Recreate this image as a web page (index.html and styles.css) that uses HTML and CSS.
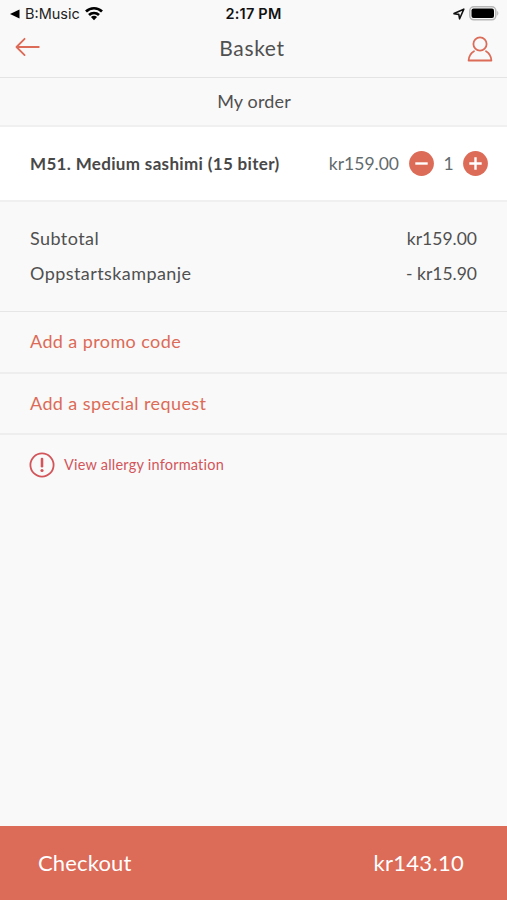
FILE: index.html
```html
<!DOCTYPE html>
<html lang="en">
<head>
<meta charset="utf-8">
<title>Basket</title>
<link rel="stylesheet" href="styles.css">
</head>
<body>
<div class="app">
  <div class="status">
    <div class="back-app">
      <svg width="10" height="10" viewBox="0 0 10 10"><path d="M0 5 9.5.6v8.8z"/></svg>
      <span>B:Music</span>
      <svg class="wifi" width="18" height="15" viewBox="0 0 18 15"><g fill="none" stroke="#000" stroke-width="2.7"><path d="M1 5.5a11.5 11.5 0 0 1 16 0"/><path d="M4 9a7.2 7.2 0 0 1 10 0"/></g><path d="M9 14.3 5.9 11.1a4.5 4.5 0 0 1 6.2 0z"/></svg>
    </div>
    <span class="clock">2:17 PM</span>
    <div class="power">
      <svg width="12" height="12" viewBox="0 0 12 12"><path d="M1 5.6 10.8 1.2 6.6 10.8 5.8 6.4z" fill="none" stroke="#111" stroke-width="1.6" stroke-linejoin="round"/></svg>
      <svg width="31" height="15" viewBox="0 0 31 15"><rect x=".8" y=".8" width="26" height="13" rx="4" fill="#f9f9f9" stroke="#b7b7b7" stroke-width="1.5"/><rect x="2.5" y="2.6" width="22.5" height="9.5" rx="2"/><path d="M28.2 4.8q2.4 2.5 0 5z" fill="#b7b7b7"/></svg>
    </div>
  </div>
  <header class="nav">
    <svg class="back" width="25" height="20" viewBox="0 0 25 20"><path d="M9.6 1.8 1.5 10l8.1 8.1M1.8 10h22" class="line"/></svg>
    <h1 class="title">Basket</h1>
    <svg width="26" height="26" viewBox="0 0 26 26"><circle cx="13" cy="8" r="6.6" class="line"/><path d="M7 15.2C3.7 17 1.9 20 1.6 24.5h22.8c-.3-4.500-2.100-7.500-5.400-9.300" class="line"/></svg>
  </header>
  <h2 class="section"><span class="my-order">My order</span></h2>
  <div class="item">
    <span class="name">M51. Medium sashimi (15 biter)</span>
    <span class="price">kr159.00</span>
    <svg width="25" height="25" viewBox="0 0 25 25"><circle cx="12.5" cy="12.5" r="12.4" class="disc"/><path d="M6.300 12.500h12.400" class="sign"/></svg>
    <span class="qty">1</span>
    <svg width="25" height="25" viewBox="0 0 25 25"><circle cx="12.5" cy="12.5" r="12.4" class="disc"/><path d="M6.300 12.500h12.400M12.500 6.300v12.400" class="sign"/></svg>
  </div>
  <div class="totals">
    <div class="row"><span class="label">Subtotal</span><span class="amount">kr159.00</span></div>
    <div class="row"><span class="label">Oppstartskampanje</span><span class="amount">- kr15.90</span></div>
  </div>
  <div class="link promo"><span>Add a promo code</span></div>
  <div class="link request"><span>Add a special request</span></div>
  <div class="allergy">
    <svg width="26" height="26" viewBox="0 0 26 26"><circle cx="13" cy="13" r="11.6" fill="none" stroke="#d2555a" stroke-width="1.8"/><path d="M13 7v7.2" stroke="#d2555a" stroke-width="2.6" stroke-linecap="round"/><circle cx="13" cy="18.5" r="1.6" fill="#d2555a"/></svg>
    <span class="allergy-text">View allergy information</span>
  </div>
  <footer class="checkout"><span class="pay">Checkout</span><span class="sum">kr143.10</span></footer>
</div>
</body>
</html>
```
FILE: styles.css
```css
* { box-sizing: border-box; }
body { margin: 0; }
.app {
  width: 507px; height: 900px;
  display: flex; flex-direction: column;
  background: #f9f9f9; color: #505050;
  font: 18px/24px Lato, "Noto Sans", sans-serif;
  font-variant-ligatures: none;
}
svg { display: block; flex: none; }
span { white-space: nowrap; }
.line { fill: none; stroke: #dc6b57; stroke-width: 1.8; stroke-linecap: round; stroke-linejoin: round; }
.disc { fill: #dc6b57; }
.sign { fill: none; stroke: #fff; stroke-width: 2.4; }
.status {
  display: grid; grid-template-columns: 1fr auto 1fr; align-items: center;
  height: 27px; padding: 0 7px 0 10px;
  font: 14.5px/20px Inter, sans-serif; color: #222;
}
.back-app { display: flex; align-items: center; gap: 5px; }
.clock { margin-right: 3px; font-weight: 600; color: #111; letter-spacing: .2px; }
.power { display: flex; align-items: center; justify-content: flex-end; gap: 4px; }
.nav {
  display: flex; justify-content: space-between; align-items: center;
  height: 51px; padding: 0 14px 6px 15px; border-bottom: 1px solid #e4e4e4;
}
.back { margin-bottom: 4px; }
.title { margin: 0 3px 2px 0; font-size: 21px; font-weight: 400; letter-spacing: .65px; }
.section {
  display: flex; align-items: center; justify-content: center;
  height: 49px; margin: 0; padding: 0 0 1px 1px; border-bottom: 2px solid #f0f0f0;
  font-size: 18px; font-weight: 400; letter-spacing: .15px;
}
.item {
  display: flex; align-items: center;
  height: 75px; padding: 0 19px 0 30px;
  background: #fff; border-bottom: 2px solid #f0f0f0;
}
.name { margin-right: auto; font-size: 17px; font-weight: 700; letter-spacing: .34px; color: #484848; }
.price { margin-right: 10px; font-size: 17.5px; color: #626b6d; }
.qty { width: 29px; text-align: center; font-size: 17.5px; color: #626b6d; }
.totals { height: 110px; padding: 24px 30px 0; border-bottom: 1px solid #e6e6e6; }
.row { display: flex; justify-content: space-between; align-items: baseline; height: 35px; }
.label { letter-spacing: .43px; }
.amount { font-size: 17.5px; }
.link {
  display: flex; align-items: center; padding: 0 0 2px 30px;
  color: #dc6b57; border-bottom: 2px solid #eee; letter-spacing: .4px;
}
.promo { height: 62px; }
.request { height: 61px; }
.allergy { display: flex; align-items: center; gap: 9px; height: 60px; padding-left: 29px; color: #d2555a; font-size: 14.5px; letter-spacing: .22px; }
.checkout {
  display: flex; align-items: center; justify-content: space-between;
  height: 74px; margin-top: auto; padding: 0 43px 0 38px;
  background: #dc6b57; color: #fff; font-size: 22px;
}
.pay { letter-spacing: .15px; }
.sum { letter-spacing: .3px; }
```
